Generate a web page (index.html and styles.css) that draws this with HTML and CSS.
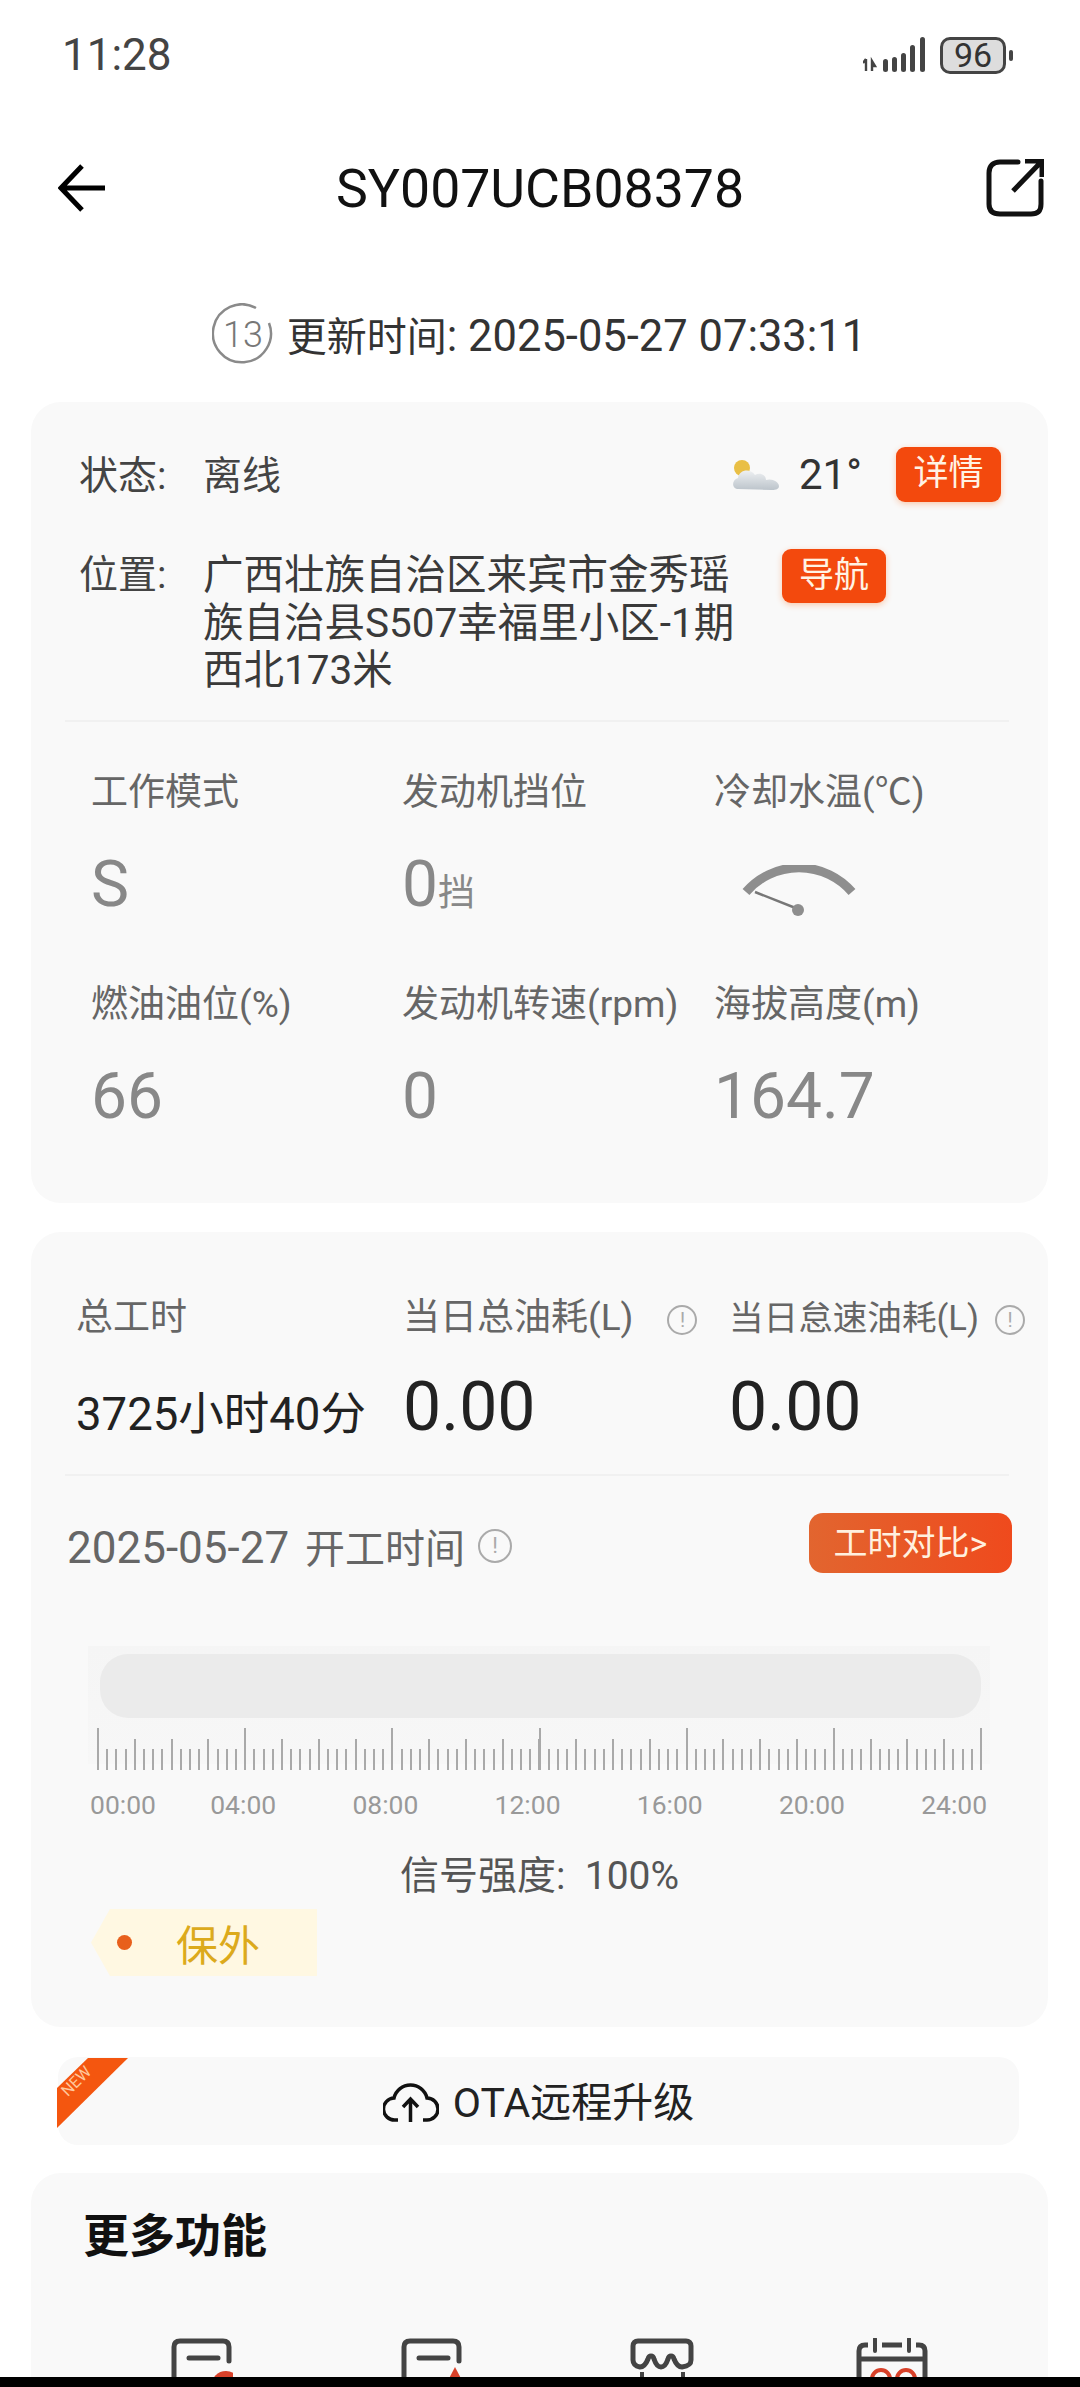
FILE: index.html
```html
<!doctype html>
<html>
    <head>
        <meta charset="utf-8" />
        <meta name="viewport" content="width=device-width, initial-scale=1" />
        <title>SY007UCB08378</title>
        <link rel="stylesheet" href="styles.css">
    </head>
    <body>
        <div class="statusbar">
            <span class="clock">11:28</span>
            <div class="status-icons">
                <svg class="signal" width="64" height="36" viewBox="0 0 64 36">
                    <path d="M3 22v12M0 26l3-4M9 34V24l3 5-3 0" fill="none" stroke="#444" stroke-width="2.4" />
                    <g fill="#444">
                        <rect x="20" y="22" width="5" height="13" rx="2.5" />
                        <rect x="29" y="20" width="5" height="15" rx="2.5" />
                        <rect x="38" y="16" width="5" height="19" rx="2.5" />
                        <rect x="47" y="8" width="5" height="27" rx="2.5" />
                        <rect x="57" y="0" width="5" height="35" rx="2.5" />
                    </g>
                </svg>
                <span class="battery">96</span>
                <span class="battery-nub"></span>
            </div>
        </div>

        <div class="navbar">
            <svg width="48" height="48" viewBox="0 0 48 48" class="back">
                <path d="M47 24H3M24 2L3 24l21 22" fill="none" stroke="#000" stroke-width="5" />
            </svg>
            <h1>SY007UCB08378</h1>
            <svg width="58" height="58" viewBox="0 0 58 58" class="share">
                <path d="M32 3H14C7 3 3 7 3 14v31c0 7 4 10 11 10h31c7 0 10-3 10-10V22" fill="none" stroke="#111" stroke-width="5" stroke-linecap="round" />
                <path d="M27 32L56 2M39 2h17v16" fill="none" stroke="#111" stroke-width="5" />
            </svg>
        </div>

        <div class="update-row">
            <svg width="62" height="62" viewBox="0 0 62 62">
                <path d="M44 5A29 29 0 1 0 57 20" fill="none" stroke="#8a8a8a" stroke-width="2.5" />
                <text x="31" y="44" text-anchor="middle" class="update-count">13</text>
            </svg>
            <span>更新时间<span class="num">: 2025-05-27 07:33:11</span></span>
        </div>

        <section class="card card-info">
            <div class="state-row">
                <span class="field-name">状态:</span>
                <span class="state-value">离线</span>
                <svg class="weather" width="48" height="36" viewBox="0 0 48 36">
                    <defs>
                        <linearGradient id="cloud" x1="0" y1="0" x2="0" y2="1">
                            <stop offset="0" stop-color="#eef0f2" />
                            <stop offset="1" stop-color="#bcc4cb" />
                        </linearGradient>
                    </defs>
                    <circle cx="10" cy="11" r="8" fill="#e9bf45" />
                    <path d="M6 32c-6 0-7-9 0-11 1-9 13-10 17-3 5-3 11 0 11 5 6-2 13 2 13 6 0 3-3 4-7 4z" fill="url(#cloud)" />
                </svg>
                <span class="temp">21°</span>
                <a class="btn-red">详情</a>
            </div>
            <div class="location-row">
                <span class="field-name">位置:</span>
                <p class="address">广西壮族自治区来宾市金秀瑶族自治县S507幸福里小区-1期西北173米</p>
                <a class="btn-red btn-nav">导航</a>
            </div>
            <div class="divider"></div>
            <div class="stats">
                <div class="stat">
                    <div class="stat-label">工作模式</div>
                    <div class="stat-value">S</div>
                </div>
                <div class="stat">
                    <div class="stat-label">发动机挡位</div>
                    <div class="stat-value">0<small>挡</small></div>
                </div>
                <div class="stat">
                    <div class="stat-label">冷却水温(℃)</div>
                    <div class="stat-value">
                        <svg class="gauge" width="114" height="52" viewBox="0 0 114 52">
                            <path d="M4 27A70 70 0 0 1 110 27" fill="none" stroke="#8e8e8e" stroke-width="9" />
                            <path d="M13 27L56 44" stroke="#777" stroke-width="2.5" />
                            <circle cx="56" cy="45" r="6" fill="#8e8e8e" />
                        </svg>
                    </div>
                </div>
                <div class="stat">
                    <div class="stat-label">燃油油位(%)</div>
                    <div class="stat-value">66</div>
                </div>
                <div class="stat">
                    <div class="stat-label">发动机转速(rpm)</div>
                    <div class="stat-value">0</div>
                </div>
                <div class="stat">
                    <div class="stat-label">海拔高度(m)</div>
                    <div class="stat-value">164.7</div>
                </div>
            </div>
        </section>

        <section class="card card-work">
            <div class="fuel-grid">
                <div class="stat-label">总工时</div>
                <div class="stat-label">当日总油耗(L)<span class="info info-far">!</span></div>
                <div class="stat-label label-tight">当日怠速油耗(L)<span class="info info-near">!</span></div>
                <div class="hours">3725小时40分</div>
                <div class="fuel">0.00</div>
                <div class="fuel">0.00</div>
            </div>
            <div class="divider"></div>
            <div class="date-row">
                <span class="date"><span class="date-num">2025-05-27</span> 开工时间</span>
                <span class="info info-date">!</span>
                <a class="btn-compare">工时对比&gt;</a>
            </div>
            <div class="timeline">
                <div class="timeline-bar"></div>
                <div class="ticks"></div>
            </div>
            <div class="hours-axis">
                <span class="first">00:00</span>
                <span>04:00</span>
                <span>08:00</span>
                <span>12:00</span>
                <span>16:00</span>
                <span>20:00</span>
                <span>24:00</span>
            </div>
            <div class="signal-text">信号强度:&nbsp; 100%</div>
            <div class="warranty">
                <span class="warranty-dot"></span>
                <span>保外</span>
            </div>
        </section>

        <a class="ota">
            <svg class="ribbon" width="72" height="72" viewBox="0 0 72 72">
                <path d="M31 0H71L0 70V30z" fill="#f4560f" />
                <text x="23" y="27" text-anchor="middle" transform="rotate(-45 23 27)" class="ribbon-text">NEW</text>
            </svg>
            <svg width="56" height="44" viewBox="0 0 56 44">
                <path d="M15 41H12A10.500 10.500 0 0 1 11 19A17 17 0 0 1 44 19A10.500 10.500 0 0 1 44 41H40" fill="none" stroke="#111" stroke-width="3.500" />
                <path d="M27.500 43V20M20 28l7.500-8 7.500 8" fill="none" stroke="#111" stroke-width="3.500" />
            </svg>
            <span class="ota-text">OTA远程升级</span>
        </a>

        <section class="card card-more">
            <h2>更多功能</h2>
            <div class="more-grid">
                <svg width="62" height="60" viewBox="0 0 62 60">
                    <path d="M3 60V9c0-4 2-6 6-6h43c4 0 6 2 6 6v14" fill="none" stroke="#444" stroke-width="5" stroke-linecap="round" />
                    <path d="M18 20h29" stroke="#444" stroke-width="5" stroke-linecap="round" />
                    <circle cx="55" cy="48" r="15" fill="#d8412a" />
                </svg>
                <svg width="62" height="60" viewBox="0 0 62 60">
                    <path d="M3 60V9c0-4 2-6 6-6h43c4 0 6 2 6 6v14" fill="none" stroke="#444" stroke-width="5" stroke-linecap="round" />
                    <path d="M18 20h29" stroke="#444" stroke-width="5" stroke-linecap="round" />
                    <path d="M54 29L66 52H42z" fill="#d8412a" />
                </svg>
                <svg width="64" height="60" viewBox="0 0 64 60">
                    <path d="M3 8c0-3 2-5 5-5h48c3 0 5 2 5 5v14c0 4-2 6-9 7-4 0-6-3-8-8-1-4-5-4-6 0-2 6-4 8-7 8s-5-2-7-8c-1-4-5-4-6 0-2 5-4 8-8 8C5 28 3 26 3 22z" fill="none" stroke="#444" stroke-width="5" />
                    <path d="M12 34v6M53 34v6" stroke="#444" stroke-width="4" />
                </svg>
                <svg width="72" height="60" viewBox="0 0 72 60">
                    <path d="M12 7H9C5 7 3 9 3 13v47M60 7h3c4 0 6 2 6 6v47M3 21h66M26 7h20" fill="none" stroke="#444" stroke-width="5" />
                    <path d="M19 1v12M53 1v12" stroke="#444" stroke-width="4" stroke-linecap="round" />
                    <circle cx="25" cy="41" r="9" fill="none" stroke="#d8412a" stroke-width="4" />
                    <circle cx="50" cy="41" r="9" fill="none" stroke="#d8412a" stroke-width="4" />
                </svg>
            </div>
        </section>

        <div class="black-edge"></div>
    </body>
</html>
```

FILE: styles.css
```css
html,
body {
    margin: 0;
    padding: 0;
}

body {
    position: relative;
    width: 1080px;
    height: 2387px;
    overflow: hidden;
    background: #fff;
    color: #333;
    font-family: Roboto, "Noto Sans CJK SC", sans-serif;
}

/* status bar */
.statusbar {
    display: flex;
    justify-content: space-between;
    align-items: center;
    height: 110px;
    padding: 0 67px 0 62px;
}

.clock {
    font-size: 44px;
    color: #444;
}

.status-icons {
    display: flex;
    align-items: center;
}

.signal {
    margin-right: 13px;
}

.battery {
    box-sizing: border-box;
    width: 66px;
    height: 37px;
    border: 3px solid #444;
    border-radius: 10px;
    background: #ddd;
    color: #333;
    font-size: 34px;
    line-height: 31px;
    text-align: center;
}

.battery-nub {
    width: 4px;
    height: 11px;
    margin-left: 3px;
    border-radius: 2px;
    background: #444;
}

/* title */
.navbar {
    display: grid;
    grid-template-columns: 1fr auto 1fr;
    align-items: center;
    height: 156px;
    padding: 0 36px;
}

.back {
    margin-left: 22px;
}

.navbar h1 {
    margin: 0;
    font-size: 53.600px;
    font-weight: 400;
    color: #111;
}

.share {
    justify-self: end;
}

.update-row {
    display: flex;
    justify-content: center;
    align-items: center;
    gap: 13px;
    height: 136px;
    padding-right: 2px;
    font-size: 40px;
    color: #333;
}

.update-row .num {
    font-size: 43.500px;
}

.update-count {
    font-size: 36px;
    font-weight: 300;
    fill: #777;
}

/* cards */
.card {
    box-sizing: border-box;
    width: 1017px;
    margin-left: 31px;
    border-radius: 30px;
    background: #f9f9f9;
}

.divider {
    height: 2px;
    margin: 0 39px 0 34px;
    background: #f1f1f1;
}

.card-info {
    height: 801px;
    padding-top: 45px;
}

.state-row {
    display: flex;
    align-items: center;
    height: 55px;
    padding: 0 47px 0 48px;
    font-size: 39px;
    color: #444;
}

.state-row .field-name,
.state-value {
    padding-bottom: 6px;
}

.field-name {
    flex: none;
    width: 124px;
}

.state-value {
    flex: 1;
}

.weather {
    filter: blur(0.6px);
}

.temp {
    width: 97px;
    margin-left: 19px;
    font-size: 42px;
    color: #333;
}

.btn-red {
    flex: none;
    width: 105px;
    height: 55px;
    border-radius: 9px;
    background: #f3490d;
    box-shadow: 0 2px 6px #f8c9ae;
    color: #fff3e4;
    font-size: 35px;
    line-height: 53px;
    text-align: center;
}

.location-row {
    display: flex;
    align-items: flex-start;
    padding: 50px 0 0 48px;
    font-size: 39px;
    line-height: 47px;
    color: #444;
}

.address {
    width: 545px;
    margin: 0;
    color: #3a3a3a;
    font-size: 40.500px;
    line-height: 47.500px;
}

.btn-nav {
    width: 104px;
    height: 54px;
    margin: -3px 0 0 34px;
}

.location-row + .divider {
    margin-top: 25px;
}

.stats {
    display: grid;
    grid-template-columns: 311px 312px 1fr;
    row-gap: 59px;
    padding: 46px 0 0 60px;
}

.stat-label {
    font-size: 37px;
    line-height: 50px;
    color: #666;
    white-space: nowrap;
}

.stat-value {
    display: flow-root;
    height: 72px;
    margin-top: 31px;
    font-size: 64px;
    line-height: 72px;
    color: #888;
}

.stat-value small {
    font-size: 37px;
}

.gauge {
    display: block;
    margin: 16px 0 0 28px;
}

/* work hours card */
.card-work {
    height: 795px;
    margin-top: 29px;
    padding-top: 61px;
}

.fuel-grid {
    display: grid;
    grid-template-columns: 327px 326px 1fr;
    align-items: baseline;
    padding: 0 0 19px 45px;
}

.fuel-grid .label-tight {
    font-size: 34.600px;
}

.hours {
    margin-top: 24px;
    font-size: 45.500px;
    line-height: 80px;
    color: #222;
}

.fuel {
    margin-top: 24px;
    font-size: 68px;
    line-height: 80px;
    color: #222;
}

.info {
    display: inline-block;
    box-sizing: border-box;
    width: 30px;
    height: 30px;
    border: 2px solid #aaa;
    border-radius: 50%;
    color: #aaa;
    font-size: 20px;
    line-height: 26px;
    text-align: center;
    vertical-align: 3px;
}

.info-far {
    margin-left: 34px;
}

.info-near {
    margin-left: 16px;
}

.date-row {
    display: flex;
    align-items: center;
    padding: 35px 36px 0;
}

.date {
    margin-top: 6px;
    font-size: 40px;
    color: #666;
}

.date-num {
    margin-right: 6px;
    font-size: 44px;
}

.info-date {
    width: 34px;
    height: 34px;
    margin: 6px auto 0 13px;
    font-size: 22px;
    line-height: 30px;
}

.btn-compare {
    width: 203px;
    height: 60px;
    border-radius: 14px;
    background: linear-gradient(90deg, #e2652f, #ef4a1d);
    color: #fff0df;
    font-size: 34px;
    line-height: 60px;
    text-align: center;
}

.timeline {
    width: 902px;
    margin: 71px 0 0 57px;
    padding-top: 8px;
    background: linear-gradient(#f5f5f5, #f7f7f7) no-repeat;
    background-size: 100% 118px;
}

.timeline-bar {
    width: 881px;
    height: 64px;
    margin-left: 12px;
    border-radius: 28px;
    background: #ebebeb;
}

.ticks {
    width: 885px;
    height: 42px;
    margin: 10px 0 0 9px;
    background-image:
        repeating-linear-gradient(90deg, #a9a9a9 0 2px, transparent 2px 147.170px),
        repeating-linear-gradient(90deg, #a9a9a9 0 2px, transparent 2px 36.790px),
        repeating-linear-gradient(90deg, #a9a9a9 0 2px, transparent 2px 9.198px);
    background-repeat: no-repeat;
    background-position: left bottom;
    background-size: 100% 42px, 100% 31px, 100% 21px;
}

.hours-axis {
    display: flex;
    gap: 76.200px;
    margin-top: 20px;
    padding-left: 59px;
    font-size: 26.500px;
    line-height: 30px;
    color: #999;
}

.hours-axis .first {
    margin-right: -22px;
}

.signal-text {
    margin-top: 31px;
    font-size: 39px;
    line-height: 50px;
    color: #555;
    text-align: center;
}

.warranty {
    display: flex;
    align-items: center;
    gap: 44px;
    box-sizing: border-box;
    width: 226px;
    height: 67px;
    margin: 8px 0 0 60px;
    padding-left: 26px;
    background: #fff8e2;
    clip-path: polygon(19px 0, 100% 0, 100% 100%, 19px 100%, 0 50%);
    color: #dcaa1c;
    font-size: 42px;
}

.warranty-dot {
    width: 15px;
    height: 15px;
    border-radius: 50%;
    background: #e8601c;
}

/* OTA row */
.ota {
    position: relative;
    display: flex;
    justify-content: center;
    align-items: center;
    gap: 14px;
    width: 961px;
    height: 88px;
    margin: 30px 0 0 58px;
    border-radius: 20px;
    background: #f9f9f9;
    color: #222;
    font-size: 41px;
}

.ota-text {
    padding-bottom: 5px;
}

.ribbon {
    position: absolute;
    top: 1px;
    left: -1px;
}

.ribbon-text {
    font-size: 16px;
    fill: #ffc79c;
}

/* more functions */
.card-more {
    height: 300px;
    margin-top: 28px;
    padding: 38px 0 0 52px;
}

.card-more h2 {
    margin: 0;
    font-size: 46px;
    line-height: 50px;
    font-weight: 700;
    color: #111;
}

.more-grid {
    display: grid;
    grid-template-columns: repeat(4, 230px);
    justify-items: center;
    margin: 77px 0 0 4px;
}

/* the black strip at the bottom of the photo */
.black-edge {
    position: absolute;
    left: 0;
    right: 0;
    bottom: 0;
    height: 10px;
    background: #000;
}
```
